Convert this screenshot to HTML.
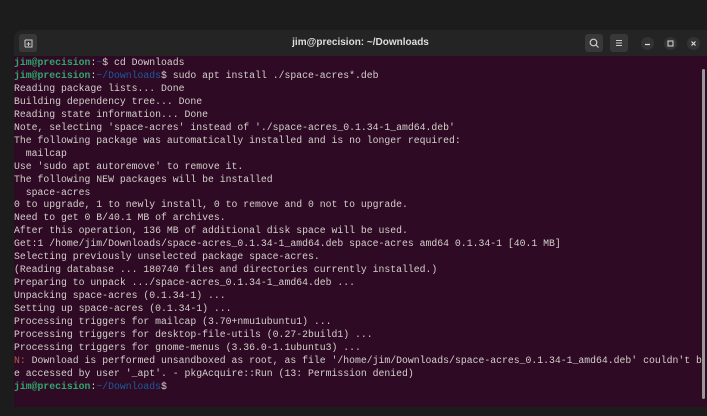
<!DOCTYPE html>
<html><head><style>
body{margin:0;width:707px;height:416px;background:#1c1c1c;overflow:hidden;position:relative;font-family:"Liberation Sans",sans-serif}
.win{position:absolute;left:14px;top:30px;width:700px;height:377px;background:#2f0a24;border-radius:8px 0 0 0;overflow:hidden}
.tb{position:absolute;left:0;top:0;right:0;height:26px;background:#242424}
.title{position:absolute;left:0;width:693px;top:7px;text-align:center;color:#ddd;font-weight:bold;font-size:10px}
.btn{position:absolute;top:4px;width:18px;height:18px;background:#383838;border-radius:3px}
.c{position:absolute;top:7px;width:13px;height:13px;border-radius:50%;background:#333}
pre{position:absolute;left:0;top:27px;margin:0;font-family:"Liberation Mono",monospace;font-size:9.8px;line-height:12.95px;color:#d3d0cb;white-space:pre}
.g{color:#2fa86c;font-weight:bold}.b{color:#1f5a9e}.n{color:#b2604f}
.sb{position:absolute;left:688px;top:39px;width:3px;height:330px;background:#999;border-radius:2px}
</style></head><body>
<div class="win">
<div class="tb">
<div class="btn" style="left:5px"><svg width="18" height="18"><path d="M6 6v7M6 6h7v7H6M9.5 8v4M7.5 10h4" stroke="#ccc" fill="none" stroke-width="1"/></svg></div>
<div class="title">jim@precision: ~/Downloads</div>
<div class="btn" style="left:571px"><svg width="18" height="18"><circle cx="8.5" cy="8.5" r="3.3" stroke="#ccc" fill="none" stroke-width="1.2"/><path d="M11 11l2.5 2.5" stroke="#ccc" stroke-width="1.2"/></svg></div>
<div class="btn" style="left:596px"><svg width="18" height="18"><path d="M6 6.5h6M6 9h6M6 11.5h6" stroke="#ccc" stroke-width="1"/></svg></div>
<div class="c" style="left:627px"><svg width="13" height="13"><path d="M4 7.5h5" stroke="#ddd" stroke-width="1.2"/></svg></div>
<div class="c" style="left:650px"><svg width="13" height="13"><rect x="4" y="4" width="5" height="5" stroke="#ddd" fill="none" stroke-width="1"/></svg></div>
<div class="c" style="left:673px"><svg width="13" height="13"><path d="M4.5 4.5l4 4M8.5 4.5l-4 4" stroke="#ddd" stroke-width="1.2"/></svg></div>
</div>
<pre><span class="g">jim@precision</span>:<span class="b">~</span>$ cd Downloads
<span class="g">jim@precision</span>:<span class="b">~/Downloads</span>$ sudo apt install ./space-acres*.deb
Reading package lists... Done
Building dependency tree... Done
Reading state information... Done
Note, selecting 'space-acres' instead of './space-acres_0.1.34-1_amd64.deb'
The following package was automatically installed and is no longer required:
  mailcap
Use 'sudo apt autoremove' to remove it.
The following NEW packages will be installed
  space-acres
0 to upgrade, 1 to newly install, 0 to remove and 0 not to upgrade.
Need to get 0 B/40.1 MB of archives.
After this operation, 136 MB of additional disk space will be used.
Get:1 /home/jim/Downloads/space-acres_0.1.34-1_amd64.deb space-acres amd64 0.1.34-1 [40.1 MB]
Selecting previously unselected package space-acres.
(Reading database ... 180740 files and directories currently installed.)
Preparing to unpack .../space-acres_0.1.34-1_amd64.deb ...
Unpacking space-acres (0.1.34-1) ...
Setting up space-acres (0.1.34-1) ...
Processing triggers for mailcap (3.70+nmu1ubuntu1) ...
Processing triggers for desktop-file-utils (0.27-2build1) ...
Processing triggers for gnome-menus (3.36.0-1.1ubuntu3) ...
<span class="n">N:</span> Download is performed unsandboxed as root, as file '/home/jim/Downloads/space-acres_0.1.34-1_amd64.deb' couldn't b
e accessed by user '_apt'. - pkgAcquire::Run (13: Permission denied)
<span class="g">jim@precision</span>:<span class="b">~/Downloads</span>$</pre>
<div class="sb"></div>
</div>
</body></html>
